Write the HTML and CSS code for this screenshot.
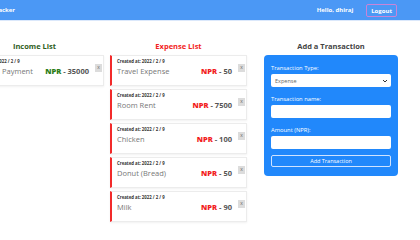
FILE: index.html
```html
<!DOCTYPE html>
<html>
<head>
    <title>Expense Tracker</title>
    <link rel="stylesheet" href="styles.css">
</head>
<body>
    <div class="header">
        <h1 class="logo">Expense Tracker</h1>
        <div class="user">
            <span class="hello">Hello, dhiraj</span>
            <button class="logout-btn">Logout</button>
        </div>
    </div>

    <div class="main">
        <div class="column income">
            <h2>Income List</h2>
            <div class="card">
                <div class="date">Created at: 2022 / 2 / 9</div>
                <div class="row">
                    <span class="name">Payment</span>
                    <span class="amount"><b>NPR</b> - 35000</span>
                </div>
                <span class="del">x</span>
            </div>
        </div>

        <div class="column expense">
            <h2>Expense List</h2>
            <div class="card">
                <div class="date">Created at: 2022 / 2 / 9</div>
                <div class="row">
                    <span class="name">Travel Expense</span>
                    <span class="amount"><b>NPR</b> - 50</span>
                </div>
                <span class="del">x</span>
            </div>
            <div class="card">
                <div class="date">Created at: 2022 / 2 / 9</div>
                <div class="row">
                    <span class="name">Room Rent</span>
                    <span class="amount"><b>NPR</b> - 7500</span>
                </div>
                <span class="del">x</span>
            </div>
            <div class="card">
                <div class="date">Created at: 2022 / 2 / 9</div>
                <div class="row">
                    <span class="name">Chicken</span>
                    <span class="amount"><b>NPR</b> - 100</span>
                </div>
                <span class="del">x</span>
            </div>
            <div class="card">
                <div class="date">Created at: 2022 / 2 / 9</div>
                <div class="row">
                    <span class="name">Donut (Bread)</span>
                    <span class="amount"><b>NPR</b> - 50</span>
                </div>
                <span class="del">x</span>
            </div>
            <div class="card">
                <div class="date">Created at: 2022 / 2 / 9</div>
                <div class="row">
                    <span class="name">Milk</span>
                    <span class="amount"><b>NPR</b> - 90</span>
                </div>
                <span class="del">x</span>
            </div>
        </div>

        <div class="column add">
            <h2>Add a Transaction</h2>
            <form class="panel">
                <label>Transaction Type:</label>
                <div class="select">
                    <span>Expense</span>
                    <svg width="6" height="4" viewBox="0 0 6 4"><path d="M1 1 L3 3 L5 1" fill="none" stroke="#333" stroke-width="1"/></svg>
                </div>
                <label>Transaction name:</label>
                <div class="input"></div>
                <label>Amount (NPR):</label>
                <div class="input"></div>
                <button type="button" class="submit-btn">Add Transaction</button>
            </form>
        </div>
    </div>
</body>
</html>
```

FILE: styles.css
```css
body {
    margin: 0;
    font-family: "Open Sans", Arial, sans-serif;
    background-color: #fff;
    overflow: hidden;
}

.header {
    display: flex;
    justify-content: space-between;
    align-items: center;
    height: 20px;
    background-color: #4b98f5;
    border-bottom: 1px solid #dbe8fb;
    padding-right: 23px;
}

.logo {
    margin: 0 0 0 -34px;
    font-size: 6px;
    font-weight: 700;
    color: #fff;
}

.user {
    display: flex;
    align-items: center;
    gap: 13px;
}

.hello {
    color: #fff;
    font-size: 6px;
    font-weight: 700;
}

.logout-btn {
    background: none;
    border: 1px solid #c884d8;
    border-radius: 2px;
    color: #fff;
    font-family: inherit;
    font-size: 6px;
    font-weight: 700;
    padding: 2px 4px;
    height: 13px;
}

/* Columns */
.main {
    display: flex;
    align-items: flex-start;
    margin-left: -35px;
    padding-top: 20px;
}

.column h2 {
    margin: 0 0 4px;
    text-align: center;
    font-size: 7.5px;
    font-weight: 700;
    line-height: 10px;
}

.income {
    width: 139px;
    margin-right: 6px;
}

.income h2 {
    color: #2f5e1c;
}

.expense {
    width: 137px;
    margin-right: 17px;
}

.expense h2 {
    color: #f21e1e;
}

.add {
    width: 134px;
}

.add h2 {
    color: #444;
    margin-bottom: 4px;
}

/* Cards */
.card {
    position: relative;
    background-color: #fff;
    border: 1px solid #ececec;
    box-shadow: 0 1px 2px rgba(0,0,0,0.06);
    height: 27px;
    margin-bottom: 3px;
    padding: 2px 14px 0 6px;
    box-sizing: content-box;
}

.expense .card {
    border-left: 2px solid #f22a2a;
    padding-left: 5px;
}

.income .name {
    margin-left: 30px;
}

.date {
    font-size: 4.3px;
    font-weight: 700;
    color: #333;
    line-height: 6px;
}

.row {
    display: flex;
    justify-content: space-between;
    align-items: center;
    margin-top: 2px;
}

.name {
    font-size: 7.5px;
    color: #777;
}

.amount {
    font-size: 7.5px;
    font-weight: 700;
    color: #555;
}

.income .amount b {
    color: #2b7d17;
}

.expense .amount b {
    color: #f21e1e;
}

.del {
    position: absolute;
    top: 8px;
    right: 1px;
    width: 7px;
    height: 8px;
    background-color: #dcdcdc;
    color: #666;
    font-size: 5px;
    line-height: 6px;
    text-align: center;
}

/* Form */
.panel {
    background-color: #2188fb;
    border-radius: 4px;
    padding: 9px 7px 9px;
    display: flex;
    flex-direction: column;
}

.panel label {
    color: #fff;
    font-size: 5.8px;
    line-height: 8px;
    margin-bottom: 2px;
}

.select {
    display: flex;
    justify-content: space-between;
    align-items: center;
    background-color: #fff;
    border-radius: 2px;
    height: 13px;
    padding: 0 3px 0 4px;
    margin-bottom: 8px;
    font-size: 5.5px;
    color: #666;
}

.input {
    background-color: #fff;
    border-radius: 2px;
    height: 13px;
    margin-bottom: 8px;
}

.submit-btn {
    background: none;
    border: 1px solid #cfe3ff;
    border-radius: 2px;
    color: #fff;
    font-family: inherit;
    font-size: 5.5px;
    height: 12px;
    padding: 0;
    margin-top: -2px;
}
```
